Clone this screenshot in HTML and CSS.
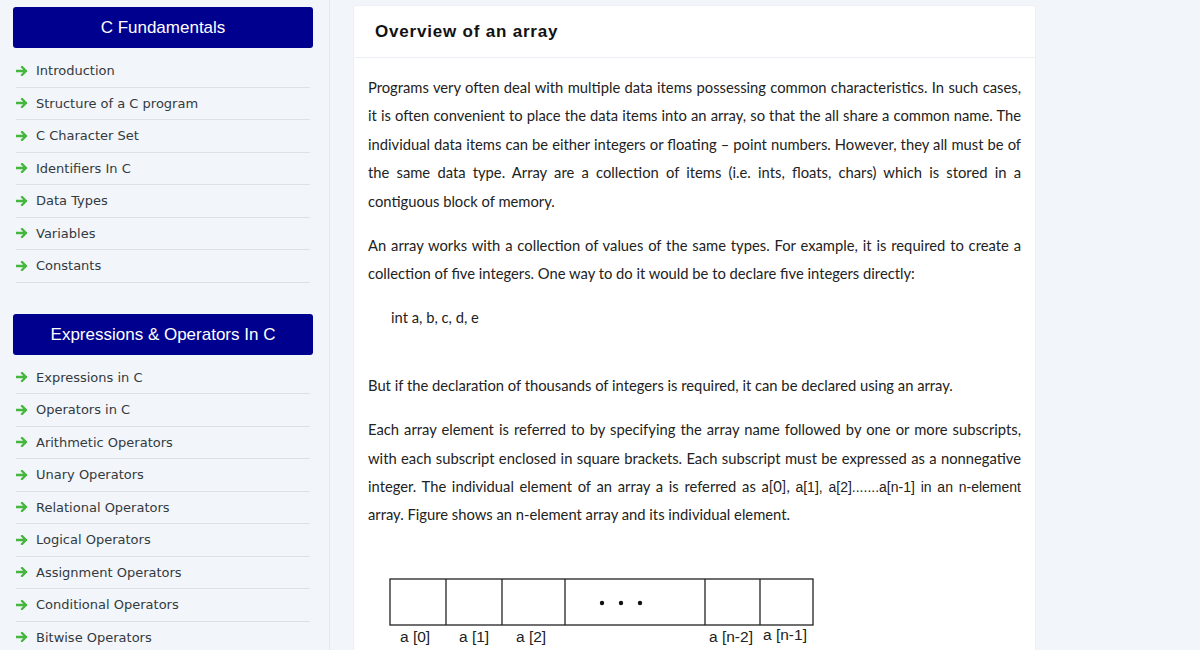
FILE: index.html
```html
<!DOCTYPE html>
<html lang="en">
<head>
<meta charset="utf-8">
<title>Overview of an array</title>
<link rel="stylesheet" href="styles.css">
</head>
<body>
<div class="page">
  <aside class="sidebar">
    <section class="menu">
      <h3 class="menu-title">C Fundamentals</h3>
      <ul class="menu-list">
        <li><span class="arrow"></span>Introduction</li>
        <li><span class="arrow"></span>Structure of a C program</li>
        <li><span class="arrow"></span>C Character Set</li>
        <li><span class="arrow"></span>Identifiers In C</li>
        <li><span class="arrow"></span>Data Types</li>
        <li><span class="arrow"></span>Variables</li>
        <li><span class="arrow"></span>Constants</li>
      </ul>
    </section>
    <section class="menu">
      <h3 class="menu-title">Expressions &amp; Operators In C</h3>
      <ul class="menu-list">
        <li><span class="arrow"></span>Expressions in C</li>
        <li><span class="arrow"></span>Operators in C</li>
        <li><span class="arrow"></span>Arithmetic Operators</li>
        <li><span class="arrow"></span>Unary Operators</li>
        <li><span class="arrow"></span>Relational Operators</li>
        <li><span class="arrow"></span>Logical Operators</li>
        <li><span class="arrow"></span>Assignment Operators</li>
        <li><span class="arrow"></span>Conditional Operators</li>
        <li><span class="arrow"></span>Bitwise Operators</li>
      </ul>
    </section>
  </aside>
  <main class="content">
    <article class="card">
      <header class="card-header"><h1>Overview of an array</h1></header>
      <div class="card-body">
        <p>Programs very often deal with multiple data items possessing common characteristics. In such cases, it is often convenient to place the data items into an array, so that the all share a common name. The individual data items can be either integers or floating – point numbers. However, they all must be of the same data type. Array are a collection of items (i.e. ints, floats, chars) which is stored in a contiguous block of memory.</p>
        <p>An array works with a collection of values of the same types. For example, it is required to create a collection of five integers. One way to do it would be to declare five integers directly:</p>
        <p class="code">int a, b, c, d, e</p>
        <p>But if the declaration of thousands of integers is required, it can be declared using an array.</p>
        <p>Each array element is referred to by specifying the array name followed by one or more subscripts, with each subscript enclosed in square brackets. Each subscript must be expressed as a nonnegative integer. The individual element of an array a is referred as a[0], <span class="alt">a[1], a[2].......a[n-1] in an n-element</span> array. Figure shows an n-element array and its individual element.</p>
        <div class="figure">
          <svg width="430" height="80" viewBox="0 0 430 80">
            <g fill="none" stroke="#222" stroke-width="1.3">
              <rect x="1" y="4" width="423" height="46"/>
              <line x1="57" y1="4" x2="57" y2="50"/>
              <line x1="113" y1="4" x2="113" y2="50"/>
              <line x1="176" y1="4" x2="176" y2="50"/>
              <line x1="316" y1="4" x2="316" y2="50"/>
              <line x1="371" y1="4" x2="371" y2="50"/>
            </g>
            <g fill="#111">
              <circle cx="213" cy="28" r="2.2"/>
              <circle cx="232" cy="28" r="2.2"/>
              <circle cx="251" cy="28" r="2.2"/>
            </g>
            <g class="fig-label" fill="#222">
              <text x="11" y="67">a [0]</text>
              <text x="70" y="67">a [1]</text>
              <text x="127" y="67">a [2]</text>
              <text x="320" y="67">a [n-2]</text>
              <text x="374" y="65">a [n-1]</text>
            </g>
          </svg>
        </div>
      </div>
    </article>
  </main>
</div>
</body>
</html>
```
FILE: styles.css
```css
html, body {
  margin: 0;
  padding: 0;
}
body {
  background: #f2f5fa;
  height: 650px;
  overflow: hidden;
}
.page {
  display: flex;
  align-items: flex-start;
}
.sidebar {
  width: 329px;
  border-right: 1px solid #e3e7ee;
  background: #f2f5fa;
  padding: 7px 0 0 0;
  min-height: 700px;
  flex-shrink: 0;
}
.menu {
  margin: 0 16px 31px 13px;
}
.menu-title {
  margin: 0 0 7px 0;
  height: 41px;
  line-height: 41px;
  background: #00008f;
  color: #fff;
  border-radius: 3px;
  font-family: "Liberation Sans", Arial, sans-serif;
  font-weight: normal;
  font-size: 17px;
  text-align: center;
}
.menu-list {
  list-style: none;
  margin: 0 3px;
  padding: 0;
}
.menu-list li {
  display: flex;
  align-items: center;
  height: 31.5px;
  border-bottom: 1px solid #dde1e7;
  font-family: "DejaVu Sans", Verdana, sans-serif;
  font-size: 13px;
  color: #333a40;
}
.arrow {
  width: 12px;
  height: 10px;
  margin-right: 8px;
  flex-shrink: 0;
  background: no-repeat center / contain url("data:image/svg+xml,%3Csvg xmlns='http://www.w3.org/2000/svg' viewBox='0 0 12 10'%3E%3Cpath d='M0.5 5 H10 M6 1 L10 5 L6 9' fill='none' stroke='%2344b73c' stroke-width='2.4' stroke-linecap='round' stroke-linejoin='round'/%3E%3C/svg%3E");
}
.content {
  margin-left: 23px;
  padding-top: 5px;
}
.card {
  width: 683px;
  background: #fff;
  border: 1px solid #eceff3;
  border-radius: 3px;
  box-sizing: border-box;
  min-height: 700px;
}
.card-header {
  height: 51px;
  border-bottom: 1px solid #eceff3;
  display: flex;
  align-items: center;
  padding-left: 21px;
}
.card-header h1 {
  margin: 0;
  font-family: "Liberation Sans", Arial, sans-serif;
  font-size: 17px;
  font-weight: bold;
  letter-spacing: 0.8px;
  color: #111;
}
.card-body {
  padding: 15px 14px 0 14px;
  font-family: Lato, "Open Sans", sans-serif;
  font-size: 14.75px;
  line-height: 28.4px;
  color: #222;
}
.card-body p {
  margin: 0 0 15.5px 0;
  text-align: justify;
}
.card-body p.code {
  margin: 0 0 40px 23px;
}
.alt {
  font-family: "Liberation Sans", Arial, sans-serif;
  font-size: 14px;
  line-height: 1;
}
.figure {
  margin: 46px 0 0 21px;
}
.figure svg {
  display: block;
}
.fig-label {
  font-family: "Liberation Sans", Arial, sans-serif;
  font-size: 15.5px;
}
```
